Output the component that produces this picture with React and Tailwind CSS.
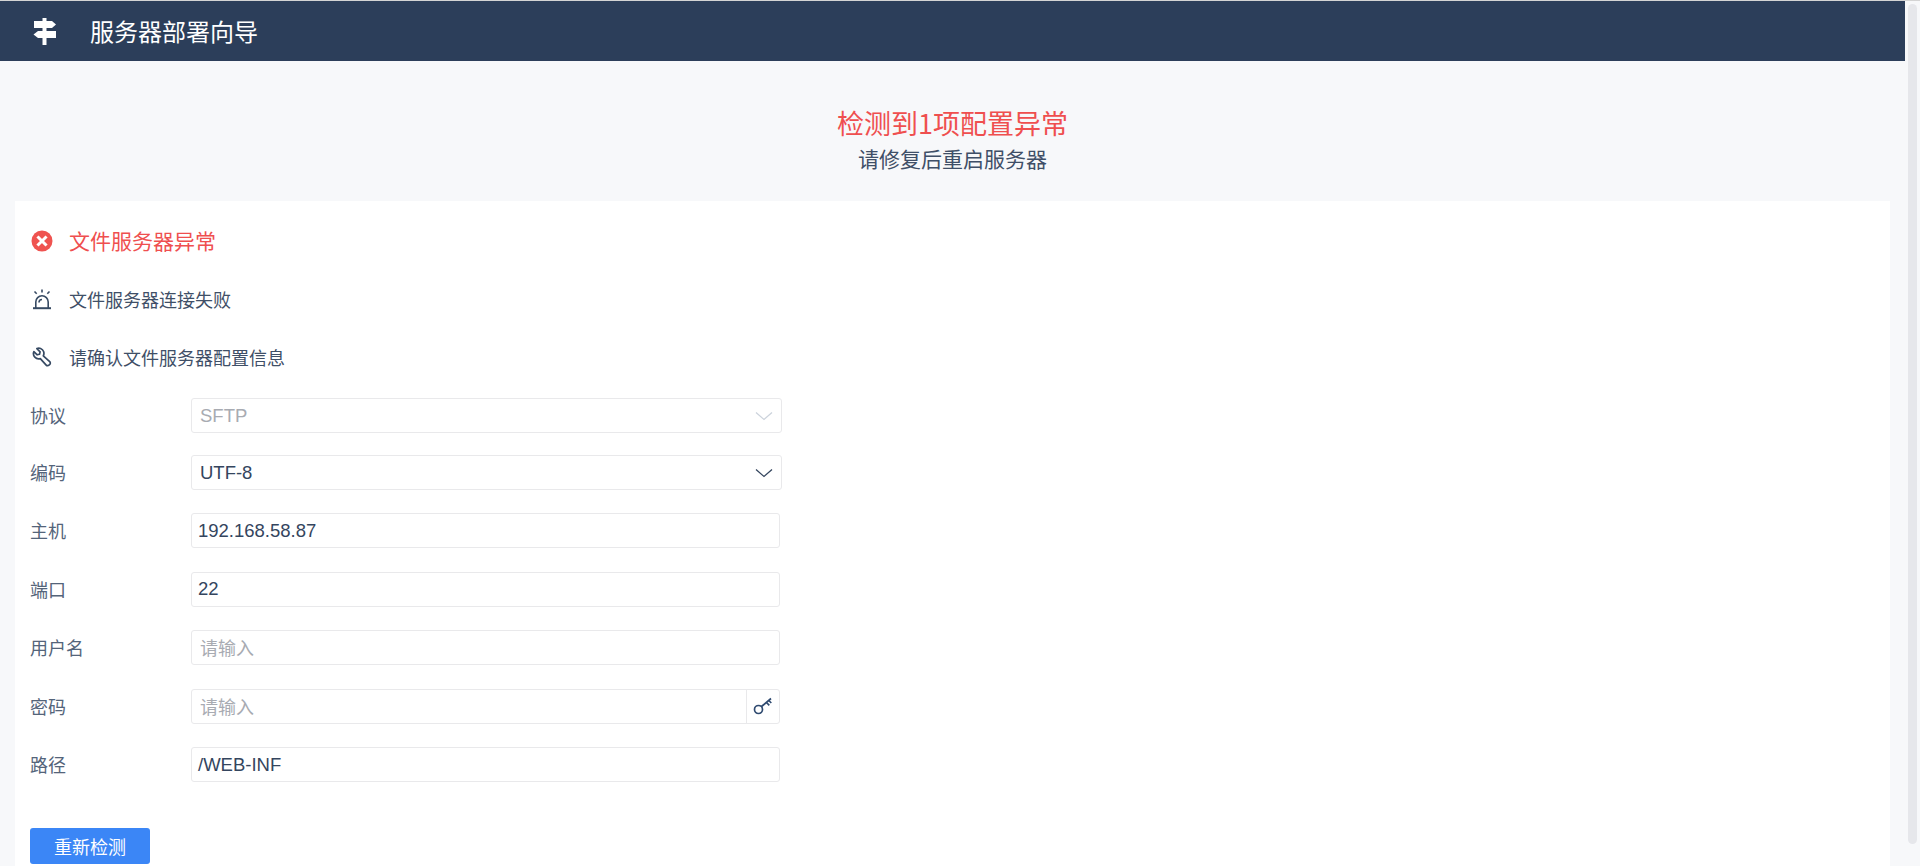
import React from 'react';

const FONT = 'font-["Microsoft_YaHei","Noto_Sans_CJK_SC",sans-serif]';
const LATIN = "font-['Liberation_Sans','Noto_Sans_CJK_SC',sans-serif]";

const Chevron = ({ className }) => (
  <svg className={className} width="18" height="10" viewBox="0 0 18 10" fill="none" stroke="currentColor" strokeWidth="1.3">
    <path d="M1 1.5 L9 8.5 L17 1.5" />
  </svg>
);

const SignIcon = () => (
  <svg width="24" height="27" viewBox="0 0 24 27" fill="#fff">
    <path d="M9.5 0h4v27h-4z" />
    <path d="M1 3h18l4 3.5-4 3.5H1z" />
    <path d="M23 13H5l-4.5 3.5L5 20h18z" />
  </svg>
);

const ErrorIcon = () => (
  <svg width="22" height="22" viewBox="0 0 22 22">
    <circle cx="11" cy="11" r="10.5" fill="#ef5350" />
    <path d="M7.5 7.5l7 7M14.5 7.5l-7 7" stroke="#fff" strokeWidth="3" strokeLinecap="square" />
  </svg>
);

const AlarmIcon = () => (
  <svg width="20" height="21" viewBox="0 0 20 21" fill="none" stroke="#374a63" strokeWidth="1.6">
    <path d="M3.8 19V13a6.2 6.2 0 0 1 12.4 0v6" />
    <path d="M1 19.2h18" strokeWidth="2" />
    <path d="M10 0.5v3M2.5 2.5l2.2 2.2M17.5 2.5l-2.2 2.2" />
    <path d="M7 13.5a3 3 0 0 1 3-3" />
  </svg>
);

const WrenchIcon = () => (
  <svg width="20" height="20" viewBox="0 0 20 20" fill="none" stroke="#374a63" strokeWidth="1.7" strokeLinejoin="round">
    <path d="M8.6 1.5a5.2 5.2 0 0 0-3.7.1l3.2 3.3-.6 2.3-2.3.6L1.9 4.6a5.2 5.2 0 0 0 6.4 7l5.9 6.5a1.9 1.9 0 0 0 2.7.1l.9-.9a1.9 1.9 0 0 0-.1-2.7L11.3 8.8a5.2 5.2 0 0 0-2.7-7.3z" />
  </svg>
);

const KeyIcon = () => (
  <svg width="20" height="20" viewBox="0 0 20 20" fill="none" stroke="#2f4a70" strokeWidth="1.7">
    <circle cx="5.5" cy="13.5" r="4" />
    <path d="M8.5 10.5L18 2.5M13.5 6.5l2.8 2.8M15.8 4.5l2.500 2.500" />
  </svg>
);

const SelectRow = ({ label, value, disabled }) => (
  <div className="flex items-center h-[35px]">
    <label className="w-[161px] text-[18px] text-[#54647a]">{label}</label>
    <div className={`w-[591px] h-[35px] border border-[#e9e9eb] rounded-[3px] flex items-center justify-between pl-[8px] pr-[8px] bg-white ${disabled ? 'text-[#a8abb2]' : 'text-[#34455e]'}`}>
      <span className={`text-[18.5px] ${LATIN}`}>{value}</span>
      <Chevron className={disabled ? 'text-[#ccd3dc]' : 'text-[#34455e]'} />
    </div>
  </div>
);

const InputRow = ({ label, value, placeholder, suffix }) => (
  <div className="flex items-center h-[35px]">
    <label className="w-[161px] text-[18px] text-[#54647a]">{label}</label>
    <div className="w-[589px] h-[35px] border border-[#e9e9eb] rounded-[3px] flex items-center bg-white">
      {value ? (
        <span className={`flex-1 pl-[6px] text-[18.5px] text-[#34455e] ${LATIN}`}>{value}</span>
      ) : (
        <span className="flex-1 pl-[8px] text-[18px] text-[#a8abb2]">{placeholder}</span>
      )}
      {suffix && <div className="w-[33px] h-full border-l border-[#e9e9eb] flex items-center justify-center">{suffix}</div>}
    </div>
  </div>
);

const App = () => {
  return (
    <div className={`h-[866px] overflow-hidden flex flex-col bg-[#f7f8fa] border-t border-[#d4d4d4] ${FONT}`}>
      <div className="flex flex-1 min-h-0">
        <div className="w-[1905px] flex flex-col">
          {/* Top bar */}
          <div className="h-[60px] shrink-0 bg-[#2c3e5a] flex items-center text-white">
            <div className="ml-[33px] w-[57px]"><SignIcon /></div>
            <span className="text-[24px] leading-none">服务器部署向导</span>
          </div>

          {/* Summary */}
          <div className="h-[140px] shrink-0 flex flex-col items-center pt-[43px]">
            <div className="text-[27px] leading-[38px] text-[#ef4f4f]">检测到1项配置异常</div>
            <div className="text-[21px] leading-[32px] text-[#3f4f67]">请修复后重启服务器</div>
          </div>

          {/* Card */}
          <div className="flex-1 mx-[15px] bg-white pl-[15px] pt-[21px]">
            <div className="flex items-center h-[38px] text-[21px] text-[#ef4f4f]">
              <div className="w-[39px] pl-[1px]"><ErrorIcon /></div>
              <span>文件服务器异常</span>
            </div>
            <div className="flex items-center h-[38px] mt-[20px] text-[18px] text-[#3f4f67]">
              <div className="w-[39px] pl-[2px]"><AlarmIcon /></div>
              <span>文件服务器连接失败</span>
            </div>
            <div className="flex items-center h-[38px] mt-[20px] text-[18px] text-[#3f4f67]">
              <div className="w-[39px] pl-[2px]"><WrenchIcon /></div>
              <span>请确认文件服务器配置信息</span>
            </div>

            <div className="flex flex-col gap-[22px] mt-[22px]">
              <SelectRow label="协议" value="SFTP" disabled />
              <SelectRow label="编码" value="UTF-8" />
            </div>
            <div className="flex flex-col gap-[23.5px] mt-[23px]">
              <InputRow label="主机" value="192.168.58.87" />
              <InputRow label="端口" value="22" />
              <InputRow label="用户名" placeholder="请输入" />
              <InputRow label="密码" placeholder="请输入" suffix={<KeyIcon />} />
              <InputRow label="路径" value="/WEB-INF" />
            </div>

            <button className="mt-[46px] w-[120px] h-[36px] bg-[#3b86f6] rounded-[3px] text-white text-[18px] leading-none">重新检测</button>
          </div>
        </div>

        {/* Scrollbar */}
        <div className="w-[15px] pl-[3px] pt-[3px]">
          <div className="w-[9px] h-[840px] bg-[#e6e7eb] rounded-[5px]" />
        </div>
      </div>
    </div>
  );
};

export default App;
